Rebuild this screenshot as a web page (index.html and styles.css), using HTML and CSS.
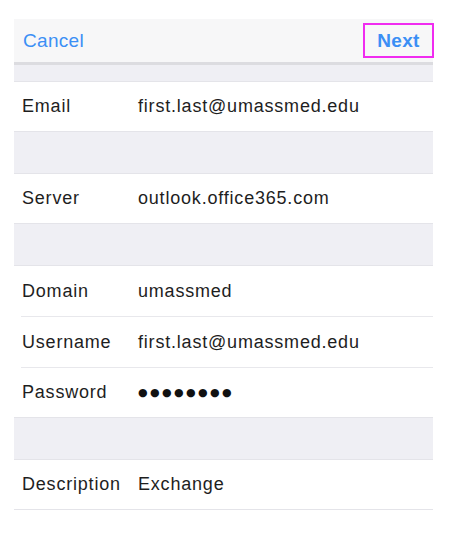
FILE: index.html
```html
<!DOCTYPE html>
<html>
<head>
<meta charset="utf-8">
<link rel="stylesheet" href="styles.css">
</head>
<body>
<div class="screen">
  <div class="nav">
    <span class="cancel">Cancel</span>
    <span class="next">Next</span>
  </div>
  <div class="nav-sep"></div>
  <div class="gap gap-top"></div>
  <div class="row"><span class="label">Email</span><span class="value">first.last@umassmed.edu</span></div>
  <div class="gap"></div>
  <div class="row"><span class="label">Server</span><span class="value">outlook.office365.com</span></div>
  <div class="gap"></div>
  <div class="row inset"><span class="label">Domain</span><span class="value">umassmed</span></div>
  <div class="row inset"><span class="label">Username</span><span class="value">first.last@umassmed.edu</span></div>
  <div class="row"><span class="label">Password</span><span class="value dots">●●●●●●●●</span></div>
  <div class="gap"></div>
  <div class="row last"><span class="label">Description</span><span class="value">Exchange</span></div>
</div>
</body>
</html>
```
FILE: styles.css
```css
html, body {
  margin: 0;
  padding: 0;
  background: #ffffff;
}
.screen {
  margin: 19px 0 0 14px;
  width: 419px;
  font-family: "Liberation Sans", Arial, sans-serif;
  color: #222222;
}
.nav {
  height: 43px;
  background: #f7f7f8;
  display: flex;
  align-items: center;
  justify-content: space-between;
}
.cancel {
  margin-left: 9px;
  font-size: 19px;
  letter-spacing: 0.3px;
  color: #3b8ff5;
}
.next {
  margin-right: -1px;
  width: 67px;
  height: 31px;
  border: 2px solid #f02cf0;
  display: flex;
  align-items: center;
  justify-content: center;
  font-size: 19px;
  font-weight: bold;
  letter-spacing: 0.3px;
  color: #3b8ff5;
}
.nav-sep {
  height: 3px;
  background: #dcdce0;
}
.gap {
  height: 41px;
  background: #efeff4;
  border-top: 1px solid #e4e4e9;
  border-bottom: 1px solid #e4e4e9;
}
.gap-top {
  height: 16px;
  border-top: 0;
}
.row {
  height: 49px;
  display: flex;
  align-items: center;
  font-size: 18px;
  letter-spacing: 0.8px;
  color: #1e1e1e;
}
.row.inset {
  height: 50px;
  border-bottom: 1px solid #e8e8ec;
  margin-left: 7px;
}
.row.last {
  border-bottom: 1px solid #e4e4e9;
}
.label {
  width: 116px;
  margin-left: 8px;
  flex: none;
}
.row.inset .label {
  margin-left: 1px;
}
.dots {
  font-family: "DejaVu Sans", sans-serif;
  font-size: 11px;
  letter-spacing: 2.4px;
  color: #111111;
}
```
